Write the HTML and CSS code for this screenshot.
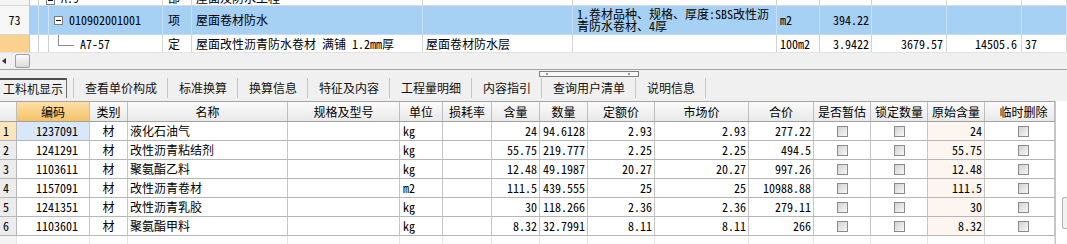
FILE: index.html
```html
<!DOCTYPE html>
<html lang="zh-CN">
<head>
<meta charset="utf-8">
<title>工料机显示</title>
<link rel="stylesheet" href="styles.css">
</head>
<body>
<section class="top">
  <div class="top-rows">
    <div class="rh-col">
      <div class="rhc rhc-part"></div>
      <div class="rhc rhc-sel">73</div>
      <div class="rhc rhc-cur"></div>
    </div>
    <div class="tbody">
      <div class="trow part">
        <div class="tc code"><i class="pbox sm"></i><span class="ctext">A.9</span></div>
        <div class="tc type">部</div>
        <div class="tc name">屋面及防水工程</div>
        <div class="tc"></div><div class="tc"></div><div class="tc"></div><div class="tc"></div><div class="tc"></div><div class="tc"></div><div class="tc"></div>
      </div>
      <div class="trow sel">
        <div class="tc code"><i class="pbox"></i><span class="ctext">010902001001</span></div>
        <div class="tc type">项</div>
        <div class="tc name">屋面卷材防水</div>
        <div class="tc expr"></div>
        <div class="tc feat"><span class="ftext">1.卷材品种、规格、厚度:SBS改性沥</span><span class="ftext">青防水卷材、4厚</span></div>
        <div class="tc">m2</div>
        <div class="tc r">394.22</div>
        <div class="tc r"></div>
        <div class="tc r"></div>
        <div class="tc"></div>
      </div>
      <div class="trow cur">
        <div class="tc code"><i class="elbow"></i><span class="ctext">A7-57</span></div>
        <div class="tc type">定</div>
        <div class="tc name">屋面改性沥青防水卷材 满铺 1.2mm厚</div>
        <div class="tc expr">屋面卷材防水层</div>
        <div class="tc feat"></div>
        <div class="tc">100m2</div>
        <div class="tc r">3.9422</div>
        <div class="tc r p3">3679.57</div>
        <div class="tc r p4">14505.6</div>
        <div class="tc">37</div>
      </div>
    </div>
  </div>
  <div class="hscroll"><i class="arrow"></i><i class="thumb"></i></div>
</section>

<nav class="tabbar">
  <span class="grip"></span>
  <div class="tab on">工料机显示</div>
  <div class="tab">查看单价构成</div>
  <div class="tab">标准换算</div>
  <div class="tab">换算信息</div>
  <div class="tab">特征及内容</div>
  <div class="tab">工程量明细</div>
  <div class="tab">内容指引</div>
  <div class="tab">查询用户清单</div>
  <div class="tab">说明信息</div>
</nav>

<section class="grid">
  <div class="gtable">
    <div class="grow ghead">
      <div class="gc"></div>
      <div class="gc hl">编码</div>
      <div class="gc">类别</div>
      <div class="gc">名称</div>
      <div class="gc">规格及型号</div>
      <div class="gc">单位</div>
      <div class="gc">损耗率</div>
      <div class="gc">含量</div>
      <div class="gc">数量</div>
      <div class="gc">定额价</div>
      <div class="gc">市场价</div>
      <div class="gc">合价</div>
      <div class="gc">是否暂估</div>
      <div class="gc">锁定数量</div>
      <div class="gc">原始含量</div>
      <div class="gc last">临时删除</div>
    </div>

    <div class="grow on">
      <div class="gc rn">1</div><div class="gc code">1237091</div><div class="gc c">材</div><div class="gc">液化石油气</div><div class="gc"></div><div class="gc u">kg</div><div class="gc"></div>
      <div class="gc r">24</div><div class="gc r">94.6128</div><div class="gc r">2.93</div><div class="gc r">2.93</div><div class="gc r">277.22</div>
      <div class="gc c"><i class="cb"></i></div><div class="gc c"><i class="cb"></i></div><div class="gc r orig">24</div><div class="gc c last"><i class="cb"></i></div>
    </div>
    <div class="grow">
      <div class="gc rn">2</div><div class="gc code">1241291</div><div class="gc c">材</div><div class="gc">改性沥青粘结剂</div><div class="gc"></div><div class="gc u">kg</div><div class="gc"></div>
      <div class="gc r">55.75</div><div class="gc r">219.777</div><div class="gc r">2.25</div><div class="gc r">2.25</div><div class="gc r">494.5</div>
      <div class="gc c"><i class="cb"></i></div><div class="gc c"><i class="cb"></i></div><div class="gc r orig">55.75</div><div class="gc c last"><i class="cb"></i></div>
    </div>
    <div class="grow">
      <div class="gc rn">3</div><div class="gc code">1103611</div><div class="gc c">材</div><div class="gc">聚氨酯乙料</div><div class="gc"></div><div class="gc u">kg</div><div class="gc"></div>
      <div class="gc r">12.48</div><div class="gc r">49.1987</div><div class="gc r">20.27</div><div class="gc r">20.27</div><div class="gc r">997.26</div>
      <div class="gc c"><i class="cb"></i></div><div class="gc c"><i class="cb"></i></div><div class="gc r orig">12.48</div><div class="gc c last"><i class="cb"></i></div>
    </div>
    <div class="grow">
      <div class="gc rn">4</div><div class="gc code">1157091</div><div class="gc c">材</div><div class="gc">改性沥青卷材</div><div class="gc"></div><div class="gc u">m2</div><div class="gc"></div>
      <div class="gc r">111.5</div><div class="gc r">439.555</div><div class="gc r">25</div><div class="gc r">25</div><div class="gc r">10988.88</div>
      <div class="gc c"><i class="cb"></i></div><div class="gc c"><i class="cb"></i></div><div class="gc r orig">111.5</div><div class="gc c last"><i class="cb"></i></div>
    </div>
    <div class="grow">
      <div class="gc rn">5</div><div class="gc code">1241351</div><div class="gc c">材</div><div class="gc">改性沥青乳胶</div><div class="gc"></div><div class="gc u">kg</div><div class="gc"></div>
      <div class="gc r">30</div><div class="gc r">118.266</div><div class="gc r">2.36</div><div class="gc r">2.36</div><div class="gc r">279.11</div>
      <div class="gc c"><i class="cb"></i></div><div class="gc c"><i class="cb"></i></div><div class="gc r orig">30</div><div class="gc c last"><i class="cb"></i></div>
    </div>
    <div class="grow">
      <div class="gc rn">6</div><div class="gc code">1103601</div><div class="gc c">材</div><div class="gc">聚氨酯甲料</div><div class="gc"></div><div class="gc u">kg</div><div class="gc"></div>
      <div class="gc r">8.32</div><div class="gc r">32.7991</div><div class="gc r">8.11</div><div class="gc r">8.11</div><div class="gc r">266</div>
      <div class="gc c"><i class="cb"></i></div><div class="gc c"><i class="cb"></i></div><div class="gc r orig">8.32</div><div class="gc c last"><i class="cb"></i></div>
    </div>
    <div class="grow filler">
      <div class="gc rn"></div><div class="gc"></div><div class="gc"></div><div class="gc"></div><div class="gc"></div><div class="gc"></div><div class="gc"></div><div class="gc"></div><div class="gc"></div><div class="gc"></div><div class="gc"></div><div class="gc"></div><div class="gc"></div><div class="gc"></div><div class="gc"></div><div class="gc"></div>
    </div>
  </div>
  <div class="vscroll"><span class="vbtn"></span></div>
</section>
</body>
</html>
```

FILE: styles.css
```css
* { box-sizing: border-box; margin: 0; padding: 0; }

html, body { background: #f0f0f0; }

body {
  width: 1067px;
  height: 244px;
  overflow: hidden;
  font-family: "Noto Sans Mono CJK SC", "Noto Sans CJK SC", monospace;
  font-size: 12px;
  line-height: 14px;
  color: #000;
}

i { font-style: normal; display: block; }

/* ---------- upper tree table ---------- */
.top-rows {
  display: flex;
  height: 52px;
  overflow: hidden;
  background: #fff;
}

.rh-col {
  flex: none;
  width: 30px;
  display: flex;
  flex-direction: column;
  border-right: 1px solid #c6c6c6;
}

.rhc {
  flex: none;
  display: flex;
  align-items: center;
  justify-content: center;
  border-bottom: 1px solid #d6d6d6;
  background: #f3f3f3;
}

.rhc-part { height: 6px; }
.rhc-sel { height: 29px; background: #f7f7f7; }
.rhc-cur { height: 19px; background: #fbd18e; }

.tbody {
  flex: 1;
  display: flex;
  flex-direction: column;
}

.trow {
  flex: none;
  display: grid;
  grid-template-columns: 133px 29px 231px 150px 204px 43px 52px 75px 75px 1fr;
  height: 19px;
  border-bottom: 1px solid #dadada;
}

.trow.part { height: 6px; }
.trow.part .tc { align-items: flex-end; }

.trow.sel {
  height: 29px;
  background: #a6d0f4;
  border-bottom-color: #c4ddf3;
}

.tc {
  display: flex;
  align-items: center;
  white-space: nowrap;
  overflow: hidden;
  border-right: 1px solid #d4d4d4;
  padding-left: 3px;
}

.trow.sel .tc { border-right-color: #c8e0f6; }

.tc.r { justify-content: flex-end; padding: 0 2px 0 0; }
.tc.r.p3 { padding-right: 3px; }
.tc.r.p4 { padding-right: 4px; }
.tc.type { padding-left: 5px; }
.tc.name { padding-left: 4px; }

.tc.feat {
  padding-left: 4px;
  flex-direction: column;
  align-items: flex-start;
  justify-content: center;
}

.ftext {
  display: block;
  height: 12px;
  line-height: 12px;
  white-space: nowrap;
}

.tc.code {
  padding-left: 0;
  background:
    linear-gradient(#d0d0d0, #d0d0d0) 8px 0 / 1px 100% no-repeat,
    linear-gradient(#d0d0d0, #d0d0d0) 18px 0 / 1px 100% no-repeat;
}

.trow.sel .tc.code {
  background:
    linear-gradient(#cfe4f7, #cfe4f7) 8px 0 / 1px 100% no-repeat,
    linear-gradient(#cfe4f7, #cfe4f7) 18px 0 / 1px 100% no-repeat;
}

.pbox {
  flex: none;
  width: 9px;
  height: 9px;
  margin-left: 24px;
  border: 1px solid #7d7d7d;
  background: #fff;
  position: relative;
}

.pbox::after {
  content: "";
  position: absolute;
  left: 1px;
  right: 1px;
  top: 3px;
  height: 1px;
  background: #111;
}

.pbox.sm { margin-left: 16px; }
.pbox + .ctext { margin-left: 6px; }

.elbow {
  flex: none;
  align-self: flex-start;
  width: 16px;
  height: 11px;
  margin-left: 28px;
  border-left: 1px solid #8a8a8a;
  border-bottom: 1px solid #8a8a8a;
}

.elbow + .ctext { margin-left: 6px; }

/* ---------- horizontal scrollbar ---------- */
.hscroll {
  height: 18px;
  display: flex;
  align-items: center;
  background: #f0f0f0;
  border-top: 1px solid #e2e2e2;
  border-bottom: 1px solid #a3a3a3;
}

.arrow {
  width: 0;
  height: 0;
  margin-left: 2px;
  border-top: 3px solid transparent;
  border-bottom: 3px solid transparent;
  border-right: 4px solid #2c2c2c;
}

.thumb {
  width: 15px;
  height: 14px;
  margin-left: 9px;
  border: 1px solid #9e9e9e;
  border-radius: 2px;
  background: linear-gradient(#fcfcfc, #dadada);
}

/* ---------- tab bar ---------- */
.tabbar {
  position: relative;
  height: 31px;
  padding-top: 8px;
  display: flex;
  align-items: flex-start;
  background: #f0f0f0;
}

.grip {
  position: absolute;
  left: 539px;
  top: 1px;
  width: 100px;
  height: 6px;
  border: 1px solid #7e7e7e;
  background:
    linear-gradient(#9a9a9a, #9a9a9a) 6px 1px / 2px 2px no-repeat,
    linear-gradient(#9a9a9a, #9a9a9a) 88px 1px / 2px 2px no-repeat,
    #f8f8f8;
}

.tab {
  height: 20px;
  display: flex;
  align-items: center;
  padding: 0 10px 0 11px;
  border-left: 1px solid #c4c4c4;
  white-space: nowrap;
  font-family: "Noto Sans CJK SC", sans-serif;
  color: #111;
}

.tab:last-child { border-right: 1px solid #c4c4c4; }

.tab.on {
  width: 67px;
  padding: 0 3px;
  margin-right: 6px;
  border-left: 0;
  border-top: 2px solid #4e4e4e;
  border-right: 1px solid #6e6e6e;
}

/* ---------- material grid ---------- */
.grid {
  display: flex;
  height: 143px;
  background: #fff;
}

.gtable { width: 1055px; flex: none; }

.grow {
  display: grid;
  grid-template-columns: 17px 73px 38px 160px 112px 43px 49px 48px 48px 67px 94px 65px 57px 57px 57px 70px;
  height: 19px;
  border-bottom: 1px solid #b6b6b6;
}

.ghead {
  height: 21px;
  border-top: 1px solid #a4a4a4;
  border-bottom: 1px solid #a0a0a0;
  background: linear-gradient(#fbfbfb, #e9e9e9);
  font-family: "Noto Sans CJK SC", sans-serif;
}

.gc {
  display: flex;
  align-items: center;
  white-space: nowrap;
  overflow: hidden;
  padding: 0 2px;
  border-right: 1px solid #c6c6c6;
}

.ghead .gc { justify-content: center; border-right-color: #bdbdbd; }
.ghead .gc.hl { background: linear-gradient(#fde0a8, #f5c266); }
.ghead .gc.last { padding-left: 10px; }

.gc.rn { background: #ececec; padding-left: 3px; border-right-color: #b8b8b8; }
.grow.on .gc.rn { background: #fbe5bb; }
.gc.code { justify-content: center; padding-left: 10px; }
.grow.on .gc.code { background: #d9e8f9; }
.gc.c { justify-content: center; }
.gc.c.last { padding-left: 10px; }
.gc.u { padding-left: 3px; }
.gc.r { justify-content: flex-end; }
.gc.orig { background: #fdf5ef; }

.cb {
  width: 11px;
  height: 11px;
  border: 1px solid #8b8b8b;
  background: linear-gradient(135deg, #d2d2d2, #f7f7f7);
}

.grow.filler { height: 8px; border-bottom: 0; }
.grow.filler .gc { border-right-color: #e4e4e4; }
.grow.filler .gc.rn { background: #f4f4f4; }

.vscroll {
  flex: 1;
  border-left: 1px solid #c6c6c6;
  background: #fff;
  padding-top: 96px;
  display: flex;
  justify-content: flex-end;
}

.vbtn {
  width: 5px;
  height: 32px;
  border: 1px solid #b4b4b4;
  border-right: 0;
  border-radius: 3px 0 0 3px;
  background: #f2f2f2;
}
```
